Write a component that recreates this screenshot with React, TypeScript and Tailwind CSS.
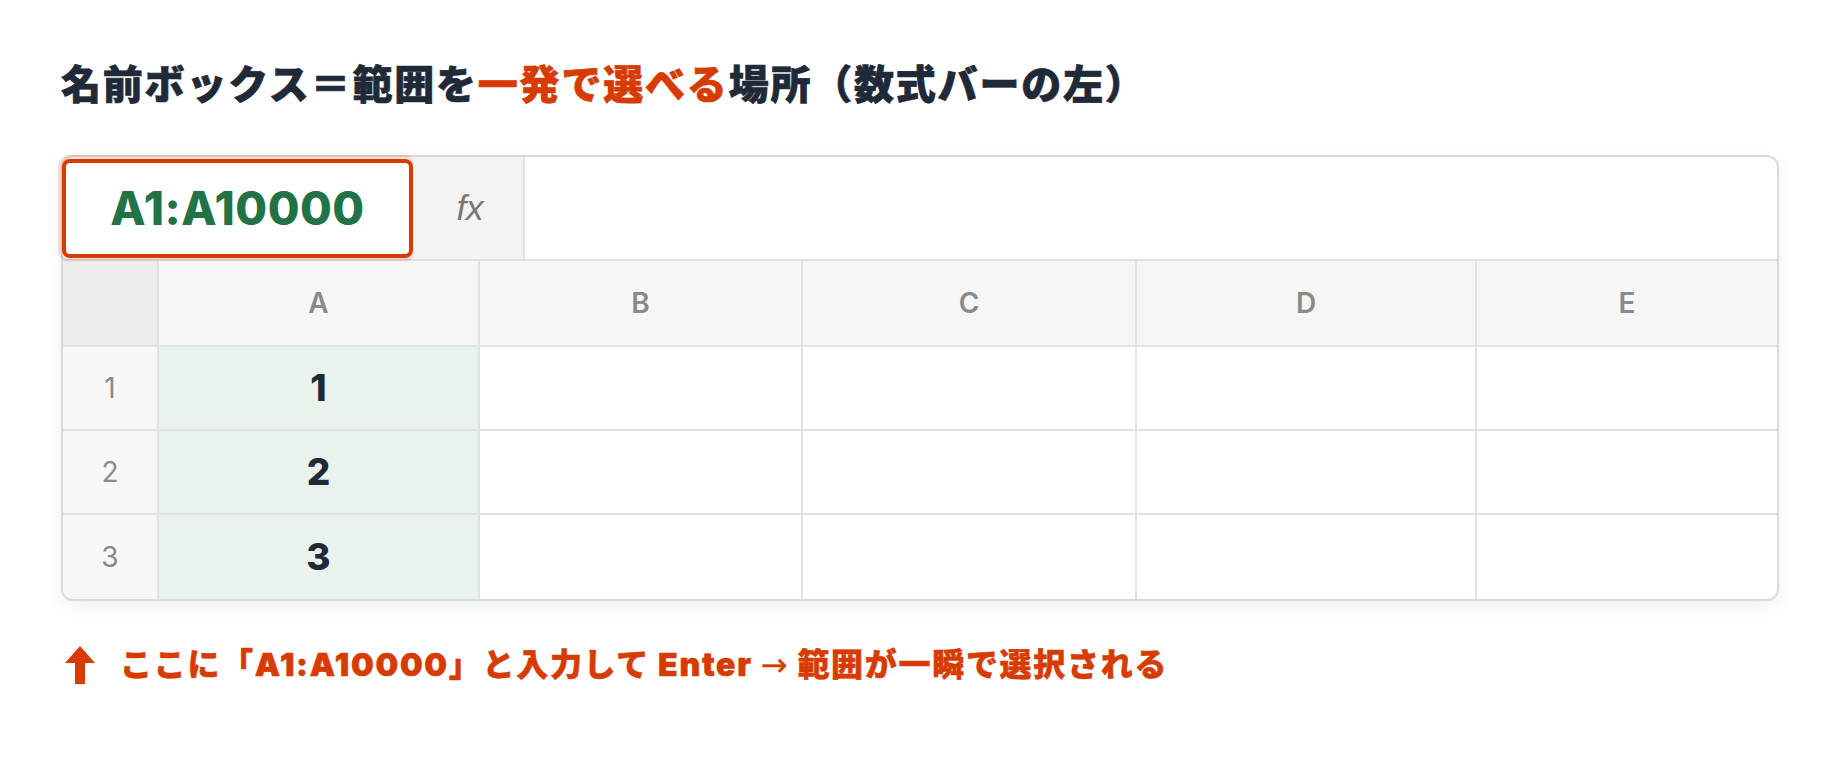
import React from 'react';

const FONT = { fontFamily: '"Inter", "Noto Sans CJK JP", sans-serif' };

const COLS = ['A', 'B', 'C', 'D', 'E'];
const ROWS = [1, 2, 3];

const UpArrow = () => (
  <svg width="30" height="38" viewBox="0 0 30 38" className="shrink-0">
    <polygon points="15,0 30,17 0,17" fill="#d83b01" />
    <rect x="10" y="15" width="10" height="23" fill="#d83b01" />
  </svg>
);

export default function App() {
  return (
    <div className="min-h-screen bg-white pl-[61px] pt-[55px] text-[#1f2937]" style={FONT}>
      <h1 className="text-[40px] font-black leading-[60px] tracking-[1.8px] whitespace-nowrap [-webkit-text-stroke:0.7px_currentColor]">
        名前ボックス＝範囲を<span className="text-[#d83b01]">一発で選べる</span>場所（数式バーの左）
      </h1>

      <div className="mt-[40px] w-[1718px] rounded-xl border-2 border-[#dadada] bg-white shadow-[0_6px_18px_rgba(0,0,0,0.06)]">
        {/* formula bar */}
        <div className="flex h-[104px] items-center border-b-2 border-[#e0e0e0]">
          <div className="-ml-[1px] flex h-[99px] w-[351px] shrink-0 items-center justify-center rounded-lg border-4 border-[#d83b01] bg-white shadow-[0_0_0_4px_rgba(216,59,1,0.16)]">
            <span className="text-[46px] font-extrabold tracking-[0.5px] text-[#217346]">A1:A10000</span>
          </div>
          <div className="flex h-full w-[112px] shrink-0 items-center justify-center border-r-2 border-[#e0e0e0] bg-[#f3f3f3]">
            <span className="pl-[4px] text-[35px] italic text-[#777777]" style={{ fontFamily: '"Liberation Sans", sans-serif' }}>
              fx
            </span>
          </div>
          <div className="h-full flex-1 rounded-tr-xl bg-white" />
        </div>

        {/* grid */}
        <div className="grid grid-cols-[96px_321px_323px_334px_340px_1fr] overflow-hidden rounded-b-xl">
          <div className="h-[86px] border-r-2 border-b-2 border-[#e2e2e2] bg-[#ececec]" />
          {COLS.map((c, i) => (
            <div
              key={c}
              className={`flex h-[86px] items-center justify-center border-b-2 border-[#e2e2e2] bg-[#f6f6f6] text-[28px] font-semibold text-[#8a8a8a] ${i < 4 ? 'border-r-2' : ''}`}
            >
              {c}
            </div>
          ))}
          {ROWS.map((r, ri) => (
            <React.Fragment key={r}>
              <div
                className={`flex h-[84px] items-center justify-center border-r-2 border-[#e2e2e2] bg-[#f7f7f7] text-[28px] font-normal text-[#8a8a8a] ${ri < 2 ? 'border-b-2' : ''}`}
              >
                {r}
              </div>
              {COLS.map((c, i) => (
                <div
                  key={c}
                  className={`flex h-[84px] items-center justify-center border-[#e2e2e2] ${i < 4 ? 'border-r-2' : ''} ${ri < 2 ? 'border-b-2' : ''} ${i === 0 ? 'bg-[#e9f3ec] text-[37px] font-extrabold text-[#1f2937]' : 'bg-white'}`}
                >
                  {i === 0 ? r : ''}
                </div>
              ))}
            </React.Fragment>
          ))}
        </div>
      </div>

      <div className="mt-[42px] flex items-center gap-[25px] pl-[4px]">
        <UpArrow />
        <p className="text-[32px] font-black leading-[44px] tracking-[1.7px] text-[#d83b01] whitespace-nowrap [-webkit-text-stroke:0.5px_currentColor]">
          ここに「A1:A10000」と入力して Enter{' '}
          <span className="font-normal [-webkit-text-stroke:0.3px_currentColor]" style={{ fontFamily: '"DejaVu Sans", sans-serif' }}>
            →
          </span>{' '}
          範囲が一瞬で選択される
        </p>
      </div>
    </div>
  );
}
